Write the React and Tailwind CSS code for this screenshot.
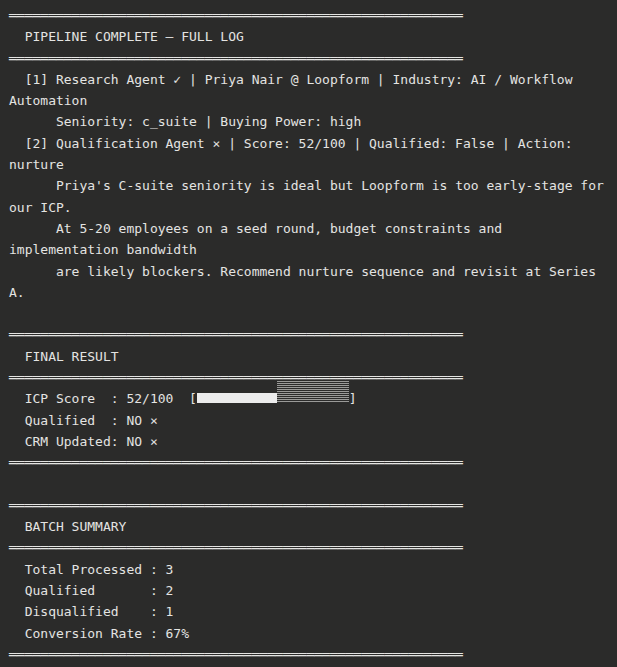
const SEP = "═".repeat(58);

const log = [
  SEP,
  "  PIPELINE COMPLETE — FULL LOG",
  SEP,
  "  [1] Research Agent ✓ | Priya Nair @ Loopform | Industry: AI / Workflow Automation",
  "      Seniority: c_suite | Buying Power: high",
  "  [2] Qualification Agent × | Score: 52/100 | Qualified: False | Action: nurture",
  "      Priya's C-suite seniority is ideal but Loopform is too early-stage for our ICP.",
  "      At 5-20 employees on a seed round, budget constraints and implementation bandwidth",
  "      are likely blockers. Recommend nurture sequence and revisit at Series A.",
  "",
  SEP,
  "  FINAL RESULT",
  SEP,
];

const result = [
  "  Qualified  : NO ×",
  "  CRM Updated: NO ×",
  SEP,
  "",
  SEP,
  "  BATCH SUMMARY",
  SEP,
  "  Total Processed : 3",
  "  Qualified       : 2",
  "  Disqualified    : 1",
  "  Conversion Rate : 67%",
  SEP,
];

function Line({ children }) {
  return <div className="min-h-[21.3px]">{children}</div>;
}

export default function App() {
  const score = 52;

  return (
    <div className="min-h-[667px] bg-[#2b2b2a] pt-[5px] pl-[9px] font-['DejaVu_Sans_Mono','Liberation_Mono',monospace] text-[13px] leading-[21.3px] text-[#e4e4e2] whitespace-pre-wrap">
      <div className="w-[596px]">
        {log.map((l, i) => (
          <Line key={i}>{l}</Line>
        ))}
        {/* score bar */}
        <Line>
          {"  ICP Score  : " + score + "/100  ["}
          <span className="inline-flex h-[21px] w-[152px] items-end align-top">
            <span className="mb-[6px] h-[10px] bg-[#ececec]" style={{ width: `${score * 1.54}px` }} />
            <span className="mb-[6px] h-[22px] flex-1 bg-[repeating-linear-gradient(to_bottom,#9a9a98_0_1px,transparent_1px_2px)]" />
          </span>
          {"]"}
        </Line>
        {result.map((l, i) => (
          <Line key={i}>{l}</Line>
        ))}
      </div>
    </div>
  );
}
